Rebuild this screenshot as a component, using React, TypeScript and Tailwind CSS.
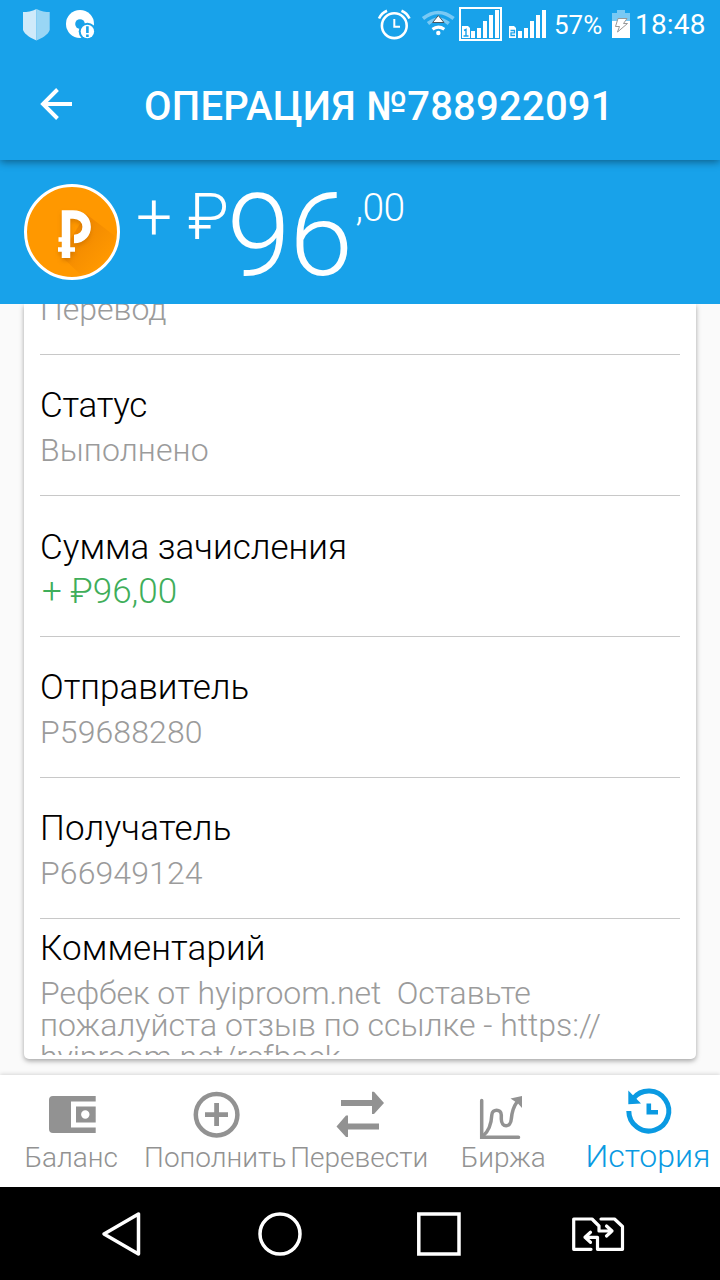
import React from "react";

type Row = { label: string; value: string; positive?: boolean; labelClass: string };

const rows: Row[] = [
  { label: "Статус", value: "Выполнено", labelClass: "tracking-[-0.3px]" },
  { label: "Сумма зачисления", value: "+ ₽96,00", positive: true, labelClass: "pt-px" },
  { label: "Отправитель", value: "P59688280", labelClass: "" },
  { label: "Получатель", value: "P66949124", labelClass: "tracking-[0.22px]" },
];

function StatusBar() {
  return (
    <div className="flex h-[50px] shrink-0 items-center text-white">
      <svg className="h-[50px] w-[110px] shrink-0" viewBox="0 0 110 50">
        <path d="M36.5 9C32 11.5 27 12 23 12V30C25 35 31 38 36.5 40.500Z" fill="#cfeafa" />
        <path d="M36.500 9C41 11.500 46 12 49.700 12V30C48 35 42 38 36.500 40.500Z" fill="#99d6f5" />
        <circle cx="80" cy="24" r="14" fill="#fff" />
        <circle cx="80" cy="24" r="4.800" fill="#18a2ea" />
        <circle cx="87.400" cy="31.500" r="8.700" fill="#18a2ea" />
        <circle cx="87.400" cy="31.500" r="6.700" fill="#fff" />
        <path d="M87.400 26.200V33M87.400 34.500V37" stroke="#18a2ea" strokeWidth="2.600" />
      </svg>
      <svg className="ml-[260px] h-[50px] w-[180px] shrink-0" viewBox="370 0 180 50">
        <g fill="none" stroke="#fff" strokeWidth="2.600">
          <circle cx="394.300" cy="25.700" r="12.400" />
          <path d="M394.300 19V26.700H400" strokeWidth="2" />
          <path d="M379 18.500Q381.500 13 387 10.700M409.500 18.500Q407 13 401.500 10.700" />
        </g>
        <g fill="none" strokeWidth="3.600">
          <path d="M423 18.500Q438.300 6.500 453.600 18.500" stroke="#79c9f4" />
          <path d="M428 23.500Q438.300 15 448.800 23.500" stroke="#79c9f4" />
          <path d="M432.500 29.300Q438.300 25 444.300 29.300" stroke="#fff" strokeWidth="3.200" />
        </g>
        <circle cx="438.300" cy="33" r="2.200" fill="#fff" />
        <path d="M438.300 15.500L444 22.500H432.600Z" fill="#fff" stroke="#465a66" strokeWidth="1" />
        <rect x="460" y="8" width="41" height="32" fill="none" stroke="#fff" strokeWidth="2" />
        <path d="M462 26h6l2 2v10h-8ZM471 31h4v7h-4ZM477 28h4v10h-4ZM483 21h4v17h-4ZM489 15h4v23h-4ZM495 10h4v28h-4Z" fill="#fff" />
        <path d="M464 30.500L466 29.500V36M463.500 36H468.500" fill="none" stroke="#18a2ea" strokeWidth="1.400" />
        <path d="M509 26h5l2 2v10h-7ZM518 31h4v7h-4ZM524 28h4v10h-4ZM530 21h4v17h-4ZM536 15h4v23h-4ZM542 10h4v28h-4Z" fill="#fff" />
        <path d="M510.500 30.500H514.500V32.800H511V35.500H515" fill="none" stroke="#18a2ea" strokeWidth="1.300" />
      </svg>
      <span className="ml-[4px] w-[56px] text-[26px] leading-[50px] whitespace-nowrap">57%</span>
      <svg className="h-[50px] w-[22px] shrink-0" viewBox="610 0 22 50">
        <path d="M617 10h8v3h5v9h-18v-9h5Z" fill="#79c9f4" />
        <path d="M612 21h18v17h-18Z" fill="#fff" />
        <path d="M618 18.500H627L623.500 23.500H627.500L617.500 32L619.500 26.500H615.500Z" fill="#fff" stroke="#999" strokeWidth="1" />
      </svg>
      <span className="ml-[3px] text-[28px] leading-[50px] whitespace-nowrap tracking-[0.2px]">18:48</span>
    </div>
  );
}

function Coin() {
  return (
    <svg className="ml-[24px] mt-[24px] h-[96px] w-[96px] shrink-0" viewBox="0 0 96 96">
      <defs>
        <linearGradient id="coinShade" x1="0.2" y1="0.2" x2="0.8" y2="0.8">
          <stop offset="0" stopColor="#ee8600" />
          <stop offset="1" stopColor="#ff9800" />
        </linearGradient>
        <filter id="coinBlur" x="-40%" y="-40%" width="180%" height="180%">
          <feGaussianBlur stdDeviation="2" />
        </filter>
      </defs>
      <circle cx="48" cy="48" r="46.500" fill="#ff9800" stroke="#fff" strokeWidth="3" />
      <path d="M62 30L91 52A43 43 0 0 1 56 90L38 73L46 56Z" fill="url(#coinShade)" />
      <g fill="none" stroke="#c06a00" strokeOpacity=".5" transform="translate(0 3)" filter="url(#coinBlur)">
        <path d="M42 74V30.500H49C67 30.500 67 55 50 55" strokeWidth="8.500" />
        <path d="M34 65.500H51" strokeWidth="4.600" />
      </g>
      <g fill="none" stroke="#fff">
        <path d="M42 74V30.500H49C67 30.500 67 55 50 55" strokeWidth="8.500" />
        <path d="M34.500 55.500H46M34 65.500H51" strokeWidth="4.600" />
      </g>
    </svg>
  );
}

function DetailRow({ label, value, positive, labelClass }: Row) {
  return (
    <div className="h-[141px] shrink-0 border-b border-[#c8c8c8] pt-[28px]">
      <div className={`text-[35px] leading-[45px] text-black ${labelClass}`}>{label}</div>
      <div
        className={
          positive
            ? "pl-[2px] text-[35px] leading-[43px] text-[#3fae5a]"
            : "text-[32px] leading-[44px] tracking-[0.1px] text-[#9b9b9b]"
        }
      >
        {value}
      </div>
    </div>
  );
}

const navItems = [
  {
    label: "Баланс",
    icon: (
      <path
        fillRule="evenodd"
        fill="#929292"
        d="M53 21H95.700V26.500H71V52.500H95.700V58H53Q49 58 49 54V25Q49 21 53 21ZM76 31.500H95.700V47.500H76ZM85.300 35.300A4.200 4.200 0 1 0 85.300 43.700A4.200 4.200 0 1 0 85.300 35.300Z"
      />
    ),
  },
  {
    label: "Пополнить",
    icon: (
      <g fill="none" stroke="#929292">
        <circle cx="72.600" cy="39.700" r="20.800" strokeWidth="4.500" />
        <path d="M61 39.700H84M72.600 28V51" strokeWidth="4.800" />
      </g>
    ),
  },
  {
    label: "Перевести",
    icon: <path fill="#929292" d="M53 25H84V16.700H86L96 28L86 39H84V31H53ZM91 48.500H60V40.500H58L48.500 51.500L58 62H60V54.500H91Z" />,
  },
  {
    label: "Биржа",
    icon: (
      <g fill="none" stroke="#929292" strokeWidth="3.500" strokeLinecap="round">
        <path d="M49.700 25.500V62.300H86.500" />
        <path d="M51 61C57 56 59.300 50 59.800 40C60 33.500 69.300 33.500 69.300 40V44C69.300 53 78.800 53 79.300 44C80 36 82 31 85 27" />
        <path d="M78.500 23.500L90 21V33L86 28.500Z" fill="#929292" stroke="none" />
      </g>
    ),
  },
  {
    label: "История",
    active: true,
    icon: (
      <g fill="none" stroke="#0a9ae2" strokeWidth="5">
        <path d="M52.800 36A20 20 0 1 0 57.200 23.500" />
        <path d="M52.300 15.500L65 28.500L52.300 29.200Z" fill="#0a9ae2" stroke="none" />
        <path d="M72.800 28.500V37.300H82" strokeWidth="4.600" />
      </g>
    ),
  },
];

export default function App() {
  return (
    <div className="flex h-[1280px] w-[720px] flex-col overflow-hidden bg-[#fafafa] font-['Roboto',sans-serif]">
      <header className="relative z-20 flex h-[160px] shrink-0 flex-col bg-[#18a2ea] shadow-[0_2px_8px_rgba(0,0,0,0.42)]">
        <StatusBar />
        <div className="flex h-[110px] items-center">
          <svg className="ml-[38px] h-[36px] w-[36px] shrink-0" viewBox="38 88 36 36">
            <path d="M72 105H43M57.500 90.500L43 105L57.500 119.500" fill="none" stroke="#fff" strokeWidth="3.900" />
          </svg>
          <h1 className="ml-[70px] pt-[3px] text-[40px] leading-[48px] font-medium tracking-[0.22px] whitespace-nowrap text-white">
            ОПЕРАЦИЯ №788922091
          </h1>
        </div>
      </header>

      <section className="relative z-10 flex h-[144px] shrink-0 items-start bg-[#18a2ea] font-light whitespace-nowrap text-white">
        <Coin />
        <span className="mt-[26px] ml-[16px] text-[64px] leading-[64px]">+ ₽</span>
        <span className="mt-[18px] ml-[-2px] text-[115px] leading-[115px] tracking-[-1.500px]">96</span>
        <span className="mt-[29px] ml-[4px] text-[39px] leading-[39px] tracking-[-0.500px]">,00</span>
      </section>

      <main className="flex h-[771px] shrink-0 flex-col px-[24px] font-light">
        <div className="flex h-[755px] shrink-0 flex-col rounded-b-[5px] bg-white px-[16px] shadow-[0_2px_5px_rgba(0,0,0,0.35)]">
          <div className="flex h-[51px] shrink-0 flex-col justify-end overflow-hidden border-b border-[#c8c8c8] pb-[22px]">
            <div className="text-[32px] leading-[46px] text-[#9b9b9b]">Перевод</div>
          </div>
          {rows.map((row) => (
            <DetailRow key={row.label} {...row} />
          ))}
          <div className="h-[136px] overflow-hidden pt-[7px]">
            <div className="text-[35px] leading-[45px] tracking-[0.1px] text-black">Комментарий</div>
            <div className="mt-[6px] text-[32px] leading-[32px] whitespace-pre text-[#9b9b9b]">
              <span className="tracking-[-0.080px]">Рефбек от hyiproom.net{"  "}Оставьте</span>
              {"\nпожалуйста отзыв по ссылке - https://\n"}
              <span className="tracking-[-0.080px]">hyiproom.net/refback</span>
            </div>
          </div>
        </div>
      </main>

      <nav className="relative z-10 grid h-[112px] shrink-0 grid-cols-5 bg-white font-light shadow-[0_-1px_4px_rgba(0,0,0,0.14)]">
        {navItems.map((item) => (
          <div key={item.label} className="flex flex-col items-center">
            <svg className="h-[64px] w-[144px] shrink-0" viewBox="0 0 144 64">
              {item.icon}
            </svg>
            <span
              className={
                item.active
                  ? "text-[32px] leading-[34px] whitespace-nowrap text-[#0a9ae2]"
                  : "pr-[1.500px] text-[28px] leading-[37px] whitespace-nowrap text-[#929292]"
              }
            >
              {item.label}
            </span>
          </div>
        ))}
      </nav>

      <div className="flex h-[93px] shrink-0 bg-black">
        <svg className="h-[93px] w-[720px]" viewBox="0 1187 720 93" fill="none" stroke="#fff" strokeWidth="3.500">
          <path d="M138.500 1214V1254L104 1234Z" strokeLinejoin="round" />
          <circle cx="280" cy="1234" r="20" />
          <rect x="418.800" y="1214" width="40.200" height="40" />
          <g strokeWidth="3.200" strokeLinejoin="round" strokeLinecap="round">
            <path d="M591 1249.300H573.700V1219H592L599 1226V1231H612M606.500 1226L612 1231L606.500 1236" />
            <path d="M601 1219H614.500L622.500 1226.500V1249.300H597.500V1237.300H585M590.500 1232.300L585 1237.300L590.500 1242.300" />
          </g>
        </svg>
      </div>
    </div>
  );
}
